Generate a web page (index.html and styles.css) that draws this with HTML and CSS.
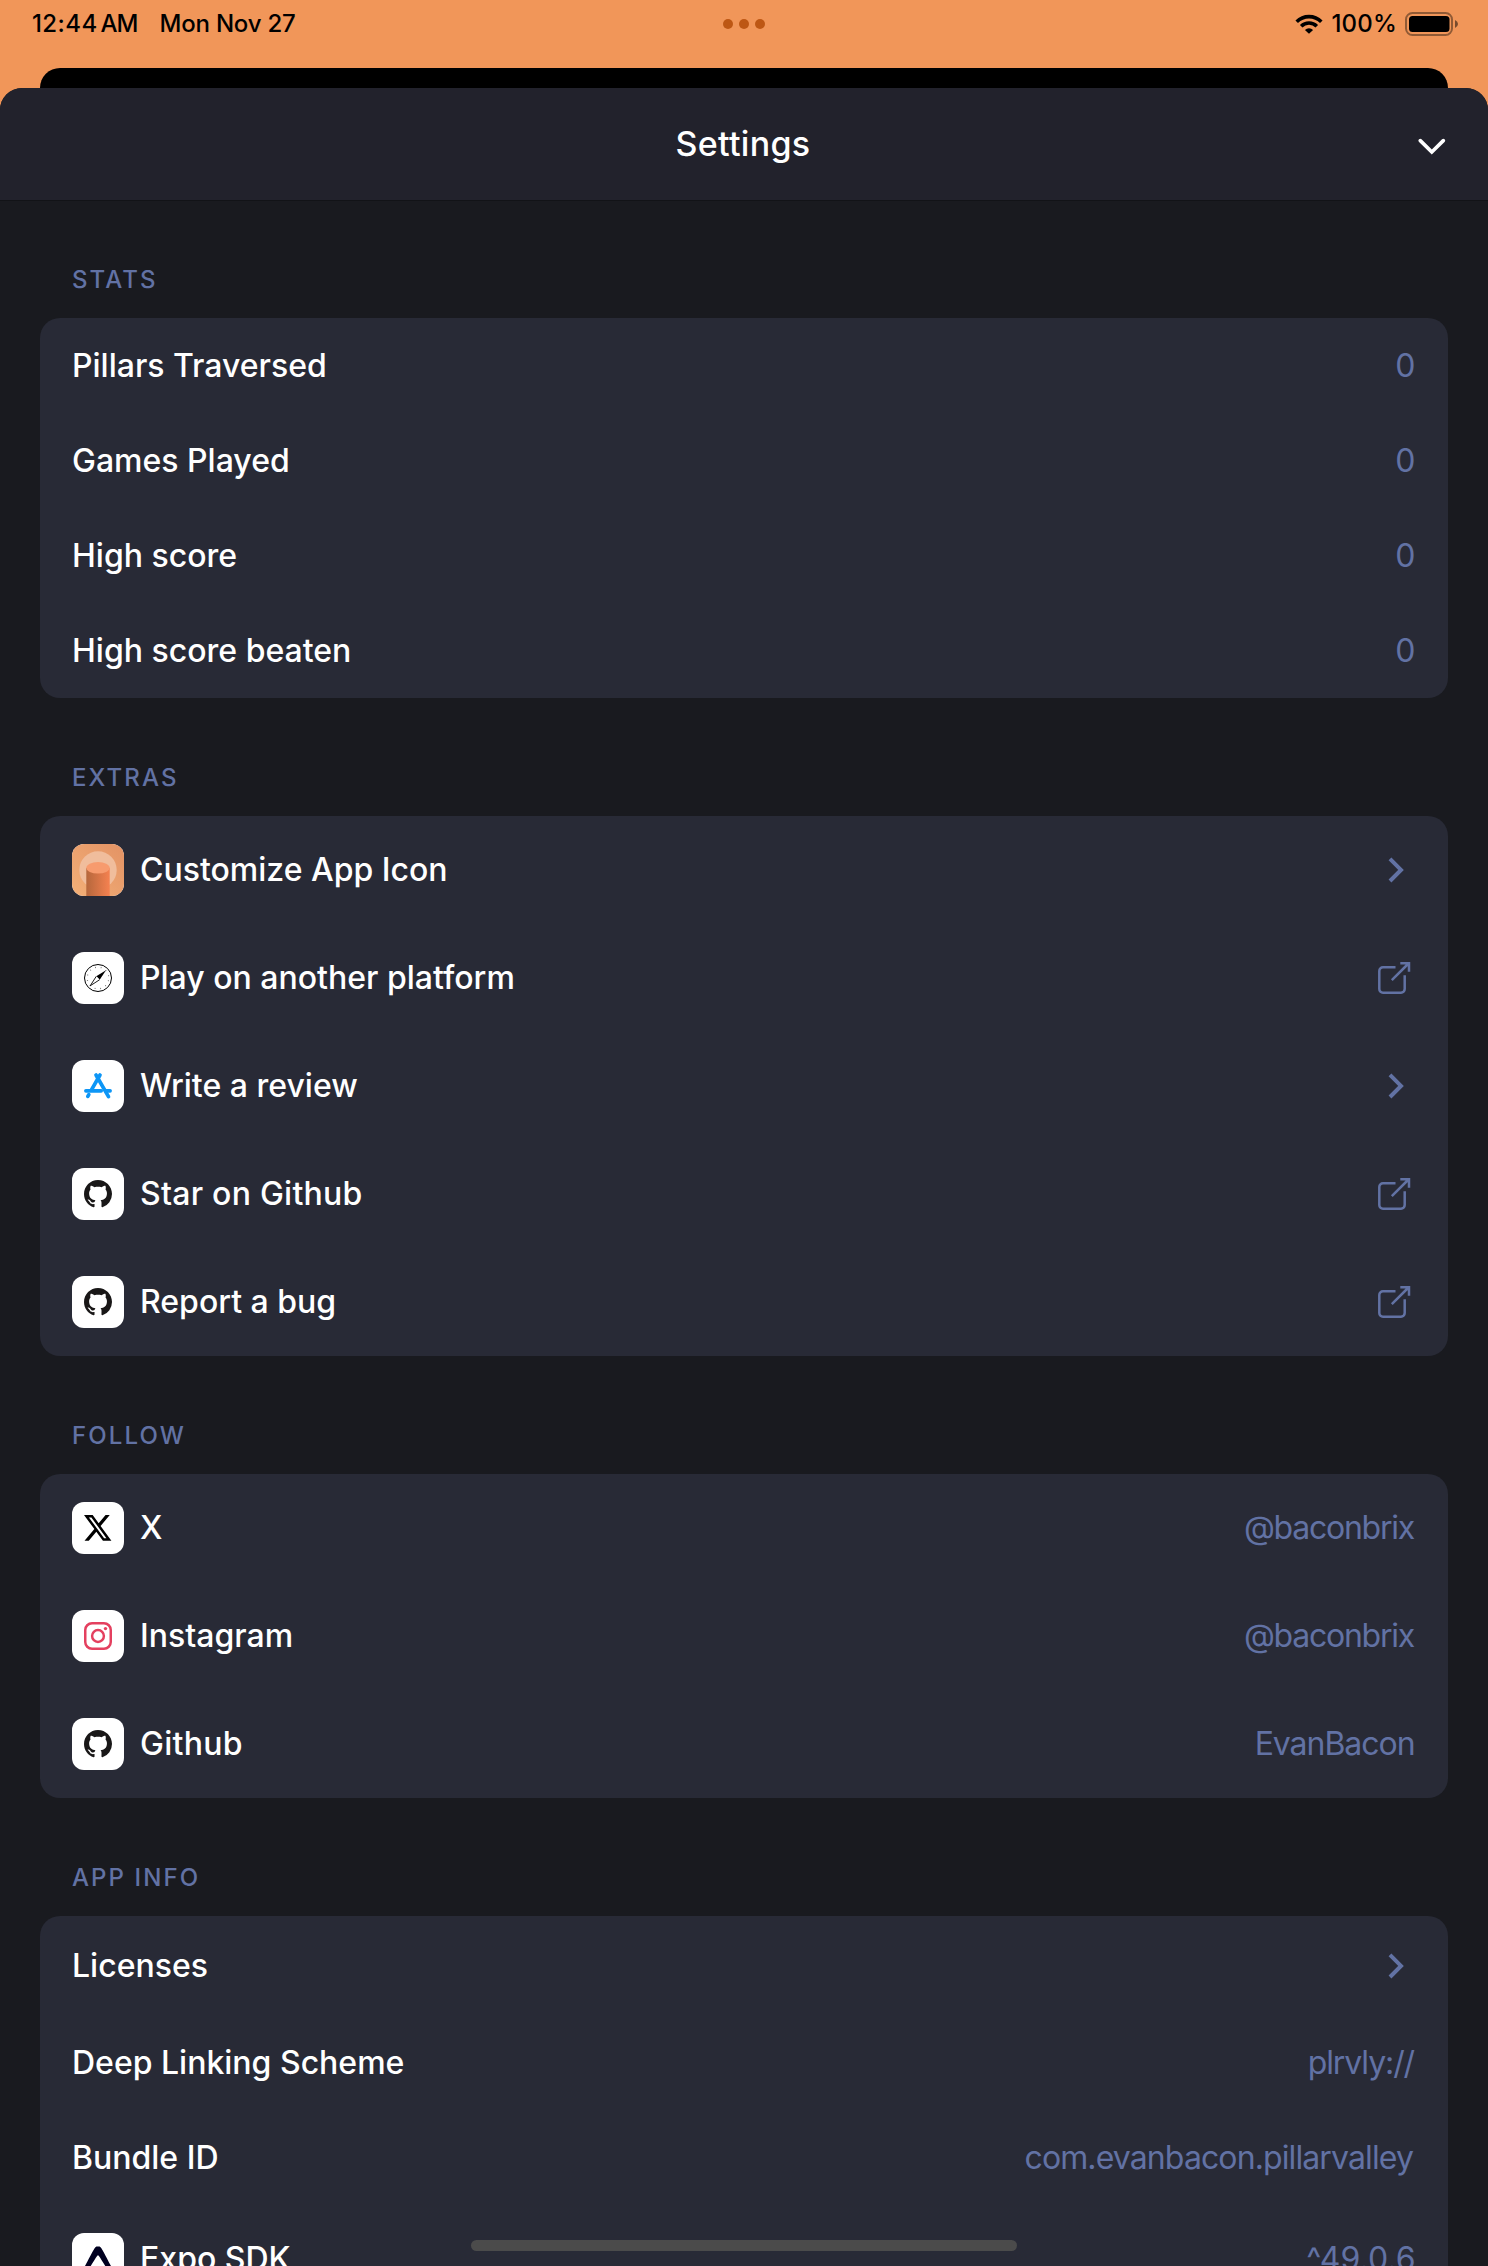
FILE: index.html
```html
<!DOCTYPE html>
<html lang="en">
<head>
<meta charset="utf-8">
<title>Settings</title>
<link rel="stylesheet" href="styles.css">
</head>
<body>
<svg class="sprite" width="0" height="0" aria-hidden="true">
  <symbol id="chevron" viewBox="0 0 16 26">
    <path d="M2 1.8 L13 12.9 L2 24" fill="none" stroke="currentColor" stroke-width="4"/>
  </symbol>
  <symbol id="external" viewBox="0 0 34 34">
    <path d="M18.5 6.2H6a3.7 3.7 0 0 0-3.700 3.700V28A3.700 3.700 0 0 0 6 31.700h18A3.700 3.700 0 0 0 27.700 28V14.200M14.800 19.200 L31.500 2.500M23.300 2.200H32V10.800" fill="none" stroke="currentColor" stroke-width="2.500"/>
  </symbol>
  <symbol id="github" viewBox="0 0 16 16">
    <path fill="#191717" d="M8 0C3.580 0 0 3.580 0 8c0 3.540 2.290 6.530 5.470 7.590.4.070.55-.17.55-.38 0-.19-.01-.82-.01-1.490-2.010.37-2.530-.49-2.690-.94-.09-.23-.48-.94-.82-1.130-.28-.15-.68-.52-.01-.53.63-.01 1.080.58 1.230.82.72 1.210 1.870.87 2.330.66.07-.52.28-.87.51-1.070-1.780-.2-3.640-.89-3.640-3.950 0-.87.31-1.590.82-2.150-.08-.2-.36-1.020.08-2.120 0 0 .67-.21 2.200.82.64-.18 1.320-.27 2-.27s1.360.09 2 .27c1.530-1.040 2.200-.82 2.200-.82.44 1.100.16 1.920.08 2.120.51.56.82 1.270.82 2.150 0 3.070-1.870 3.750-3.650 3.950.29.25.54.73.54 1.480 0 1.070-.01 1.930-.01 2.200 0 .21.15.46.55.38A8.010 8.010 0 0 0 16 8c0-4.420-3.580-8-8-8z"/>
  </symbol>
</svg>

<header class="status">
  <div class="status-left"><span class="clock">12:44</span><span class="meridiem">AM</span><span class="date">Mon Nov 27</span></div>
  <div class="dots"><i></i><i></i><i></i></div>
  <div class="status-right">
    <svg class="wifi" viewBox="0 0 28 20" width="28" height="20">
      <g fill="none" stroke="#000" stroke-width="3.600">
        <path d="M1.700 7.700 A17.400 17.400 0 0 1 26.300 7.700"/>
        <path d="M6.200 12.200 A11 11 0 0 1 21.800 12.200"/>
      </g>
      <path d="M14 19.800 L9.900 15.900 A6 6 0 0 1 18.100 15.900 Z"/>
    </svg>
    <span class="percent">100%</span>
    <svg class="battery" viewBox="0 0 54 24" width="54" height="24">
      <rect x="1" y="1" width="46" height="22" rx="6.500" fill="none" stroke="#000" stroke-opacity=".4" stroke-width="2"/>
      <rect x="4" y="4" width="40.500" height="16" rx="3.500"/>
      <path d="M50 8 Q53 9.500 53 12 T50 16 Z" fill-opacity=".5"/>
    </svg>
  </div>
</header>
<div class="backdrop"></div>

<main class="sheet">
  <div class="titlebar">
    <span></span>
    <h1>Settings</h1>
    <svg class="close" viewBox="0 0 28 18" width="28" height="18"><path d="M2.300 2.600 L13.800 14 L25.300 2.600" fill="none" stroke="#fff" stroke-width="3.600" stroke-linecap="round"/></svg>
  </div>

  <h2>STATS</h2>
  <section class="card">
    <div class="row"><span class="label">Pillars Traversed</span><span class="value digit">0</span></div>
    <div class="row"><span class="label">Games Played</span><span class="value digit">0</span></div>
    <div class="row"><span class="label">High score</span><span class="value digit">0</span></div>
    <div class="row"><span class="label">High score beaten</span><span class="value digit">0</span></div>
  </section>

  <h2>EXTRAS</h2>
  <section class="card">
    <div class="row tall">
      <svg class="tile" viewBox="0 0 52 52">
        <defs>
          <linearGradient id="sky" x1="1" y1="0" x2="0" y2="1"><stop offset="0" stop-color="#e39264"/><stop offset="1" stop-color="#f3b078"/></linearGradient>
          <linearGradient id="pillar"><stop offset="0" stop-color="#b5673c"/><stop offset="1" stop-color="#f58150"/></linearGradient>
        </defs>
        <rect width="52" height="52" fill="url(#sky)"/>
        <circle cx="26" cy="26" r="18.700" fill="#f0bd9c"/>
        <path d="M14.300 24H37.700V52H14.300Z" fill="url(#pillar)"/>
        <ellipse cx="26" cy="23.800" rx="11.700" ry="5.800" fill="#f79b6e"/>
      </svg>
      <span class="label">Customize App Icon</span><svg class="chevron"><use href="#chevron"/></svg>
    </div>
    <div class="row tall">
      <span class="tile">
        <svg viewBox="0 0 28 28">
          <circle cx="14" cy="14" r="13.500" fill="none" stroke="#000" stroke-width="1"/>
          <circle cx="14" cy="14" r="10.800" fill="none" stroke="#000" stroke-opacity=".6" stroke-width="1.200" stroke-dasharray=".8 4.855" stroke-dashoffset="3.200"/>
          <path d="M22 6.200 L12.300 12.300 L15.700 15.700 Z"/>
          <path d="M12.300 12.300 L6.200 21.800 L15.700 15.700" fill="#fff" stroke="#000" stroke-width=".9"/>
        </svg>
      </span>
      <span class="label">Play on another platform</span><svg class="external"><use href="#external"/></svg>
    </div>
    <div class="row tall">
      <span class="tile">
        <svg viewBox="0 0 28 28" fill="none" stroke="#0d96f6" stroke-width="3.700" stroke-linecap="round">
          <path d="M12 3 L24.500 24.600M16 3 L7.600 17.700M4.800 22.600 L3.800 24.400"/>
          <path d="M1.900 18.800H17.200M22 18.800H26.100"/>
        </svg>
      </span>
      <span class="label">Write a review</span><svg class="chevron"><use href="#chevron"/></svg>
    </div>
    <div class="row tall"><span class="tile"><svg><use href="#github"/></svg></span><span class="label spaced">Star on Github</span><svg class="external"><use href="#external"/></svg></div>
    <div class="row tall"><span class="tile"><svg><use href="#github"/></svg></span><span class="label">Report a bug</span><svg class="external"><use href="#external"/></svg></div>
  </section>

  <h2>FOLLOW</h2>
  <section class="card">
    <div class="row tall">
      <span class="tile">
        <svg viewBox="1.250 2.250 21.570 19.500" preserveAspectRatio="none" class="x-mark"><path d="M18.244 2.250h3.308l-7.227 8.260 8.502 11.240H16.170l-5.214-6.817L4.990 21.750H1.680l7.730-8.835L1.254 2.250H8.080l4.713 6.231zm-1.161 17.520h1.833L7.084 4.126H5.117z"/></svg>
      </span>
      <span class="label">X</span><span class="value handle">@baconbrix</span>
    </div>
    <div class="row tall">
      <span class="tile">
        <svg viewBox="0 0 28 28" fill="none" stroke="#e4405f" stroke-width="2.500">
          <rect x="1.250" y="1.250" width="25.500" height="25.500" rx="6.800"/>
          <circle cx="14" cy="14" r="5.900"/>
          <circle cx="21.500" cy="6.600" r="1.700" fill="#e4405f" stroke="none"/>
        </svg>
      </span>
      <span class="label">Instagram</span><span class="value handle">@baconbrix</span>
    </div>
    <div class="row tall"><span class="tile"><svg><use href="#github"/></svg></span><span class="label spaced">Github</span><span class="value name">EvanBacon</span></div>
  </section>

  <h2>APP INFO</h2>
  <section class="card">
    <div class="row licenses"><span class="label">Licenses</span><svg class="chevron"><use href="#chevron"/></svg></div>
    <div class="row"><span class="label">Deep Linking Scheme</span><span class="value scheme">plrvly://</span></div>
    <div class="row"><span class="label">Bundle ID</span><span class="value bundle">com.evanbacon.pillarvalley</span></div>
    <div class="row tall">
      <span class="tile"><svg viewBox="0 0 24 24"><path fill="#000020" d="M0 20.084c.043.53.23 1.063.718 1.778.58.849 1.576 1.315 2.303.567.49-.505 5.794-9.776 8.350-13.290a.761.761 0 0 1 1.248 0c2.556 3.514 7.860 12.785 8.350 13.290.727.748 1.723.282 2.303-.567.57-.835.728-1.420.728-2.046 0-.426-8.260-15.798-9.092-17.078-.8-1.230-1.044-1.498-2.397-1.542h-1.032c-1.353.044-1.597.311-2.398 1.542C8.267 3.991.33 18.758 0 19.770Z"/></svg></span>
      <span class="label">Expo SDK</span><span class="value version">^49.0.6</span>
    </div>
  </section>
</main>
<div class="home-indicator"></div>
</body>
</html>
```
FILE: styles.css
```css
* { box-sizing: border-box; }

body {
  margin: 0;
  height: 2266px;
  overflow: hidden;
  display: flex;
  flex-direction: column;
  background: #f19659;
  font-family: Inter, "Liberation Sans", sans-serif;
  color: #fff;
}

.sprite { position: absolute; }
svg { display: block; flex: none; }

/* status bar */
.status {
  display: grid;
  grid-template-columns: 1fr auto 1fr;
  align-items: center;
  height: 68px;
  padding: 0 29px 20px 32px;
  color: #000;
  font-size: 24px;
  font-weight: 450;
  line-height: 48px;
  flex: none;
}
.status-left, .status-right { display: flex; align-items: center; }
.status-right { justify-content: flex-end; }
.clock { letter-spacing: .4px; }
.meridiem { margin-left: 3px; letter-spacing: -1px; }
.date { margin-left: 22px; letter-spacing: -.2px; }
.dots { display: flex; gap: 6px; position: relative; left: -1.500px; }
.dots i { width: 10px; height: 10px; border-radius: 50%; background: #bd5714; }
.percent { margin: 0 8px 0 8px; letter-spacing: .2px; }

.backdrop {
  height: 20px;
  margin: 0 40px;
  border-radius: 20px 20px 0 0;
  background: #000;
  flex: none;
}

/* sheet */
.sheet {
  flex: 1;
  min-height: 0;
  overflow: hidden;
  border-radius: 22px 22px 0 0;
  background: #191a1f;
}
.titlebar {
  display: grid;
  grid-template-columns: 1fr auto 1fr;
  align-items: center;
  height: 113px;
  padding: 0 42px 0 40px;
  background: #22222c;
  border-bottom: 1px solid #121317;
}
h1 { margin: 0; font-size: 34px; font-weight: 470; line-height: 112px; letter-spacing: .3px; }
.close { justify-self: end; margin-top: 5px; }

h2 {
  margin: 0 0 0 72px;
  padding-top: 65px;
  height: 118px;
  font-size: 24px;
  font-weight: 450;
  line-height: 30px;
  letter-spacing: 2.100px;
  color: #6272a4;
}
.titlebar + h2 { margin-top: -1px; }

.card {
  margin: 0 40px;
  border-radius: 20px;
  overflow: hidden;
  background: #282a36;
}
.row {
  display: flex;
  align-items: center;
  height: 95px;
  padding: 0 32px;
}
.tall { height: 108px; }
.licenses { height: 99px; }

.tile {
  display: flex;
  align-items: center;
  justify-content: center;
  width: 52px;
  height: 52px;
  margin-right: 16px;
  border-radius: 12px;
  overflow: hidden;
  background: #fff;
}
.tile > svg { width: 28px; height: 28px; }
.tile > .x-mark { width: 27.400px; height: 25.800px; }

.label { flex: 1; font-size: 32px; font-weight: 470; line-height: 38px; }
.spaced { letter-spacing: .25px; }
.value { font-size: 32px; line-height: 38px; color: #6272a4; }
.digit { margin-right: .5px; }
.handle { letter-spacing: -1.240px; margin-right: 2px; }
.name { letter-spacing: -1.040px; margin-right: 1.500px; }
.scheme { letter-spacing: -1.100px; margin-right: 2px; }
.bundle { letter-spacing: -.89px; margin-right: 3px; }
.version { margin-right: .5px; }

.chevron { width: 16px; height: 26px; margin-right: 12px; color: #6272a4; }
.external { width: 34px; height: 34px; margin-right: 5.500px; color: #6272a4; }

.home-indicator {
  position: absolute;
  left: 471px;
  top: 2240px;
  width: 546px;
  height: 11px;
  border-radius: 6px;
  background: #4b4b4b;
}
```
